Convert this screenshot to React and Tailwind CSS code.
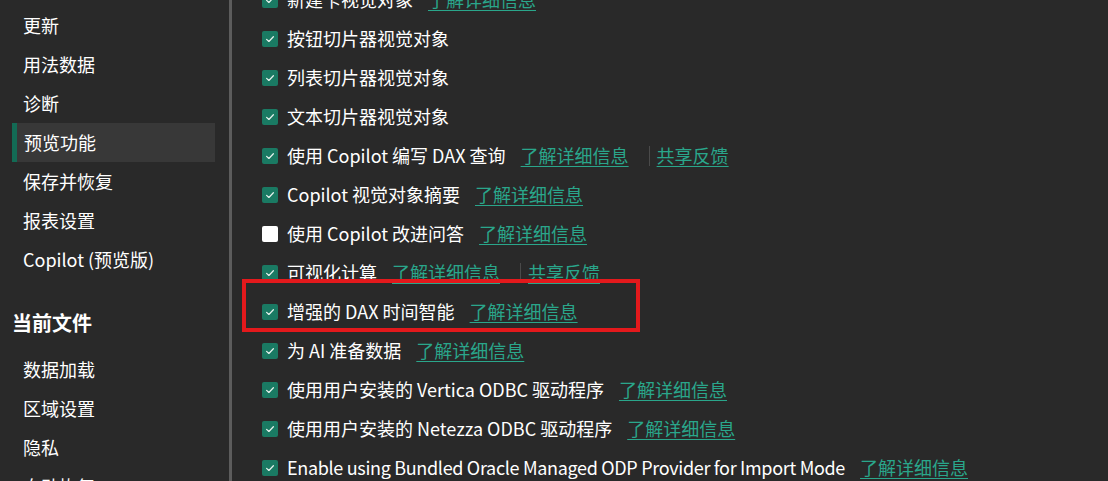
const font = { fontFamily: '"Noto Sans CJK SC", "Noto Sans", sans-serif' };

const nav1 = ["更新", "用法数据", "诊断", "预览功能", "保存并恢复", "报表设置", "Copilot (预览版)"];
const nav2 = ["数据加载", "区域设置", "隐私", "自动恢复"];

const rows = [
  { label: "新建卡视觉对象", on: true, links: ["了解详细信息"] },
  { label: "按钮切片器视觉对象", on: true, links: [] },
  { label: "列表切片器视觉对象", on: true, links: [] },
  { label: "文本切片器视觉对象", on: true, links: [] },
  { label: "使用 Copilot 编写 DAX 查询", on: true, links: ["了解详细信息", "共享反馈"] },
  { label: "Copilot 视觉对象摘要", on: true, links: ["了解详细信息"] },
  { label: "使用 Copilot 改进问答", on: false, links: ["了解详细信息"] },
  { label: "可视化计算", on: true, links: ["了解详细信息", "共享反馈"] },
  { label: "增强的 DAX 时间智能", on: true, links: ["了解详细信息"] },
  { label: "为 AI 准备数据", on: true, links: ["了解详细信息"] },
  { label: "使用用户安装的 Vertica ODBC 驱动程序", on: true, links: ["了解详细信息"] },
  { label: "使用用户安装的 Netezza ODBC 驱动程序", on: true, links: ["了解详细信息"] },
  { label: "Enable using Bundled Oracle Managed ODP Provider for Import Mode", on: true, links: ["了解详细信息"], tight: true },
];

function Check({ on }) {
  if (!on) return <span className="h-4 w-4 shrink-0 rounded-[2px] bg-white" />;
  return (
    <span className="flex h-4 w-4 shrink-0 items-center justify-center rounded-[2px] bg-[#1a7a63]">
      <svg viewBox="0 0 16 16" className="h-3 w-3" fill="none" stroke="#e8f3ef" strokeWidth="1.6" strokeLinecap="round" strokeLinejoin="round">
        <path d="M3.5 8.5l3 2.8 6-6.3" />
      </svg>
    </span>
  );
}

function Row({ r }) {
  return (
    <div className="flex h-[39px] items-center">
      <Check on={r.on} />
      <span className={`ml-[9px] whitespace-nowrap ${r.tight ? "tracking-[-0.32px]" : ""}`}>{r.label}</span>
      {r.links.map((l, i) => (
        <span key={l} className="flex items-center">
          {i > 0 && <span className="ml-[20px] mr-[7px] h-[20px] w-px bg-[#4a4a4a]" />}
          <a className={`${i === 0 ? "ml-[15px]" : ""} whitespace-nowrap text-[#2aa68b] underline underline-offset-[3px]`}>{l}</a>
        </span>
      ))}
    </div>
  );
}

export default function App() {
  return (
    <div style={font} className="relative flex h-[481px] w-[1108px] overflow-hidden bg-[#292929] text-[18px] text-white">
      <div className="w-[229px] shrink-0 pt-[6px]">
        {nav1.map((n) => (
          <div
            key={n}
            className={`ml-[12px] flex h-[39px] w-[203px] items-center ${n === "预览功能" ? "border-l-[5px] border-[#136b55] bg-[#383838] pl-[7px]" : "pl-[11px]"}`}
          >
            {n}
          </div>
        ))}
        <div className="mt-[30px] ml-[12px] text-[20px] font-bold leading-[28px]">当前文件</div>
        <div className="mt-[13px]">
          {nav2.map((n) => (
            <div key={n} className="ml-[12px] flex h-[39px] items-center pl-[11px]">{n}</div>
          ))}
        </div>
      </div>
      <div className="w-[3px] shrink-0 bg-[#5c5c5c]" />
      <div className="-mt-[20px] flex-1 pl-[30px]">
        {rows.map((r) => (
          <Row key={r.label} r={r} />
        ))}
      </div>
      {/* highlight annotation */}
      <div className="absolute left-[242px] top-[279px] h-[53px] w-[398px] border-4 border-[#e3191c]" />
    </div>
  );
}
